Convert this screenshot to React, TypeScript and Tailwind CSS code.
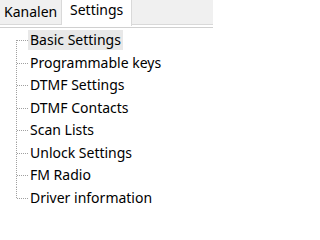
import React from "react";

const items = [
  "Basic Settings",
  "Programmable keys",
  "DTMF Settings",
  "DTMF Contacts",
  "Scan Lists",
  "Unlock Settings",
  "FM Radio",
  "Driver information",
];

function Connector({ first, last }: { first: boolean; last: boolean }) {
  // dotted tree lines, the way a WinForms TreeView draws them
  return (
    <svg width="28" height="22.5" viewBox="0 0 28 22.5" className="shrink-0 block">
      <line
        x1="16.5"
        y1={first ? 11 : 0}
        x2="16.5"
        y2={last ? 11.5 : 22.5}
        stroke="#a0a0a0"
        strokeWidth="1"
        strokeDasharray="1 1"
      />
      <line x1="17" y1="11.5" x2="28" y2="11.5" stroke="#a0a0a0" strokeWidth="1" strokeDasharray="1 1" />
    </svg>
  );
}

export default function App() {
  return (
    <div className="w-[213px] h-[222px] overflow-hidden bg-white text-black text-[14px] font-['Noto_Sans',sans-serif]">
      {/* tab strip */}
      <div className="flex h-[26px]">
        <div className="w-[62px] h-[25px] bg-[#f0f0f0] border-r border-b border-[#d9d9d9] pl-[4px] pt-[2px] leading-[20px]">
          Kanalen
        </div>
        <div className="w-[70px] h-[26px] bg-white border-r border-[#d9d9d9] pl-[8px] leading-[20px]">
          Settings
        </div>
        <div className="flex-1 h-[25px] bg-[#f0f0f0] border-b border-[#d9d9d9]" />
      </div>

      {/* tree view */}
      <div className="mt-[1px] border-t border-[#d0d0d0] pt-[1px]">
        {items.map((label, i) => (
          <div key={label} className="flex items-center h-[22.5px]">
            <Connector first={i === 0} last={i === items.length - 1} />
            <span
              className={
                "px-[2px] h-[20px] leading-[20px] whitespace-nowrap " + (i === 0 ? "bg-[#e8e8e8]" : "")
              }
            >
              {label}
            </span>
          </div>
        ))}
      </div>
    </div>
  );
}
